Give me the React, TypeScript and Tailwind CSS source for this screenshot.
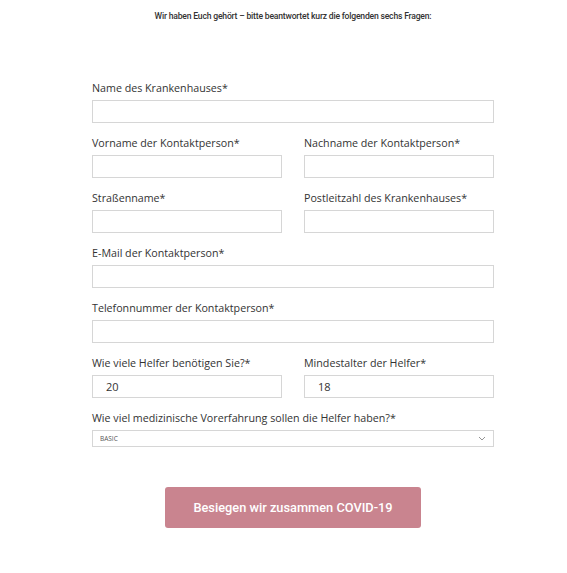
export default function App() {
  const label = "block text-[10.7px] leading-[16px] text-[#333] mb-[4px]";
  const input =
    "block w-full h-[23px] border border-[#d6d6d6] bg-white px-[13px] text-[11px] text-[#333] outline-none";

  return (
    <div className="min-h-[573px] w-full bg-white pl-[19px]" style={{ fontFamily: '"Open Sans", "Noto Sans", sans-serif' }}>
      <p
        className="pt-[10px] text-center text-[8.6px] leading-[12px] font-medium text-[#333] tracking-[-0.2px]"
        style={{ fontFamily: "Roboto, sans-serif" }}
      >
        Wir haben Euch gehört – bitte beantwortet kurz die folgenden sechs Fragen:
      </p>

      <form className="mx-auto mt-[58px] w-[402px]">
        <div className="grid grid-cols-2 gap-x-[22px] gap-y-[12px]">
          <div className="col-span-2">
            <label className={label}>Name des Krankenhauses*</label>
            <input className={input} />
          </div>
          <div>
            <label className={label}>Vorname der Kontaktperson*</label>
            <input className={input} />
          </div>
          <div>
            <label className={label}>Nachname der Kontaktperson*</label>
            <input className={input} />
          </div>
          <div>
            <label className={label}>Straßenname*</label>
            <input className={input} />
          </div>
          <div>
            <label className={label}>Postleitzahl des Krankenhauses*</label>
            <input className={input} />
          </div>
          <div className="col-span-2">
            <label className={label}>E-Mail der Kontaktperson*</label>
            <input className={input} />
          </div>
          <div className="col-span-2">
            <label className={label}>Telefonnummer der Kontaktperson*</label>
            <input className={input} />
          </div>
          <div>
            <label className={label}>Wie viele Helfer benötigen Sie?*</label>
            <input className={input} defaultValue="20" />
          </div>
          <div>
            <label className={label}>Mindestalter der Helfer*</label>
            <input className={input} defaultValue="18" />
          </div>
          <div className="col-span-2">
            <label className={label}>Wie viel medizinische Vorerfahrung sollen die Helfer haben?*</label>
            <div className="relative h-[17px] w-full border border-[#d6d6d6] bg-white">
              <span className="absolute left-[7px] top-0 text-[6.5px] leading-[15px] text-[#555]">BASIC</span>
              <svg
                className="absolute right-[7px] top-[5px]"
                width="8"
                height="5"
                viewBox="0 0 8 5"
                fill="none"
                stroke="#888"
                strokeWidth="0.9"
              >
                <path d="M1 1 L4 4 L7 1" />
              </svg>
            </div>
          </div>
        </div>

        <div className="mt-[40px] flex justify-center">
          <button
            type="button"
            className="h-[41px] w-[256px] rounded-[3px] bg-[#c9848f] text-[12.8px] font-medium text-white"
            style={{ fontFamily: "Roboto, sans-serif" }}
          >
            Besiegen wir zusammen COVID-19
          </button>
        </div>
      </form>
    </div>
  );
}
